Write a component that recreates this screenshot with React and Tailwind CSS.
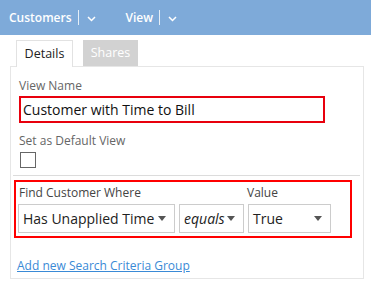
import React from "react";

const font = { fontFamily: '"Open Sans", "Noto Sans", Arial, sans-serif' };

function Chevron() {
  return (
    <svg width="9" height="6" viewBox="0 0 9 6" className="ml-[8px] mt-[2px]">
      <path d="M1 1 L4.5 4.5 L8 1" fill="none" stroke="white" strokeWidth="1.5" />
    </svg>
  );
}

function Caret() {
  return (
    <svg width="8" height="5" viewBox="0 0 8 5" className="shrink-0">
      <path d="M0 0 H8 L4 5 Z" fill="#555" />
    </svg>
  );
}

function Select({ value, w, italic }) {
  return (
    <div className={`h-[29px] border border-[#cccccc] bg-white flex items-center justify-between pl-[4px] pr-[8px] ${w}`}>
      <span className={`text-[14px] text-[#222] leading-none whitespace-nowrap ${italic ? "italic" : ""}`}>{value}</span>
      <Caret />
    </div>
  );
}

export default function App() {
  return (
    <div className="w-[371px] h-[289px] bg-white overflow-hidden" style={font}>
      {/* header bar */}
      <div className="h-[35px] bg-[#7eaad9] flex items-center pl-[9px] text-white font-semibold text-[12px]">
        <span>Customers</span>
        <span className="ml-[6px] w-px h-[15px] bg-white/80" />
        <Chevron />
        <span className="ml-[30px]">View</span>
        <span className="ml-[6px] w-px h-[15px] bg-white/80" />
        <Chevron />
      </div>

      {/* tabs */}
      <div className="flex items-end gap-[10px] pl-[16px] pt-[5px]">
        <div className="relative z-10 -mb-px w-[57px] h-[27px] border border-b-0 border-[#e2e2e2] bg-white flex items-center justify-center text-[12.5px] text-[#222]">
          Details
        </div>
        <div className="w-[55px] h-[26px] bg-[#d2d2d2] flex items-center justify-center text-[12.5px] text-white">
          Shares
        </div>
      </div>

      {/* panel */}
      <div className="ml-[10px] w-[354px] h-[213px] border border-[#e6e6e6] pt-[11px]">
        <div className="pl-[8px]">
          <div className="text-[12px] leading-[16px] text-[#666]">View Name</div>
          <div className="mt-[2px] w-[306px] h-[27px] border-2 border-[#e8000d] flex items-center pl-[2px]">
            <span className="text-[14px] text-[#111] leading-none">Customer with Time to Bill</span>
          </div>
          <div className="mt-[10px] text-[12px] leading-[16px] text-[#666]">Set as Default View</div>
          <div className="mt-[3px] ml-px w-[16px] h-[16px] border border-[#666]" />
        </div>

        <div className="mt-[7px] ml-[2px] w-[347px] h-px bg-[#dcdcdc]" />

        <div className="mt-[4px] ml-[3px] w-[338px] h-[58px] border-2 border-[#ff0000] pl-[2px] pt-[3px]">
          <div className="flex text-[12px] leading-[16px] text-[#444]">
            <span className="w-[229px] pl-[1px]">Find Customer Where</span>
            <span>Value</span>
          </div>
          <div className="mt-[3px] flex gap-[4px]">
            <Select value="Has Unapplied Time" w="w-[157px]" />
            <Select value="equals" w="w-[65px]" italic />
            <Select value="True" w="w-[83px]" />
          </div>
        </div>

        <div className="mt-[14px] pl-[6px]">
          <a href="#" className="text-[12px] text-[#3a8ad6] underline">Add new Search Criteria Group</a>
        </div>
      </div>
    </div>
  );
}
